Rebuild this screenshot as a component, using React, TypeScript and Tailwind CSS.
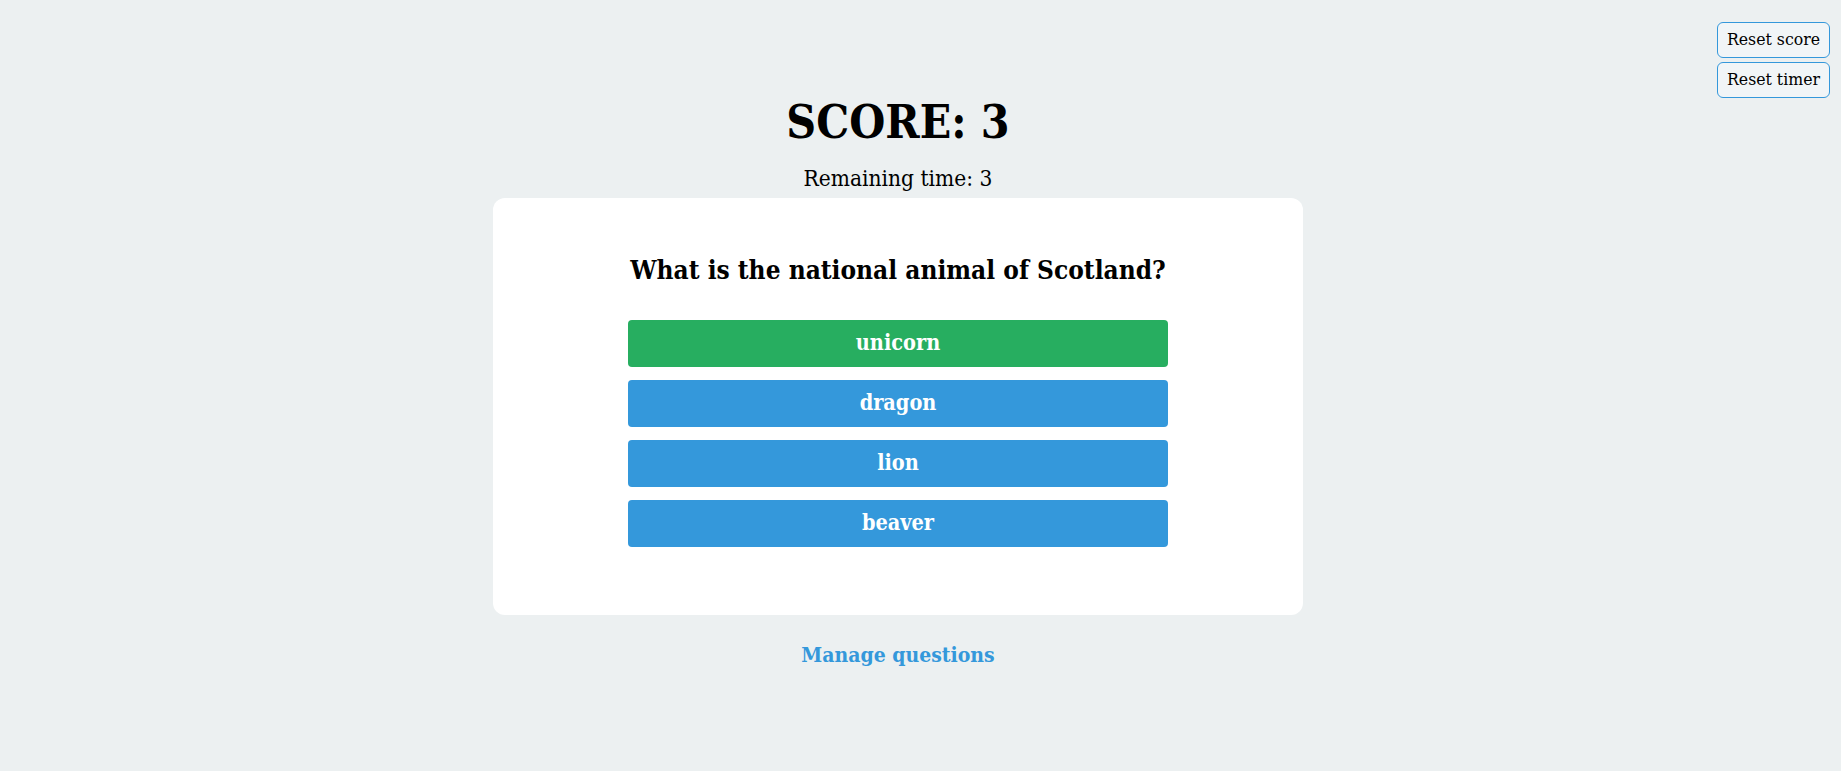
import React from "react";

const serif = { fontFamily: '"DejaVu Serif Condensed", "DejaVu Serif", serif' };

export default function App() {
  const answers = [
    { text: "unicorn", correct: true },
    { text: "dragon", correct: false },
    { text: "lion", correct: false },
    { text: "beaver", correct: false },
  ];
  return (
    <div className="relative min-h-screen w-full bg-[#ecf0f1] text-black" style={serif}>
      <div className="absolute right-[11px] top-[22px] flex flex-col items-stretch gap-[4px]">
        <button className="h-[36px] w-[113px] rounded-[6px] border border-[#3498db] bg-[#f1f5f7] text-[17.5px] leading-none text-black">
          Reset score
        </button>
        <button className="h-[36px] w-[113px] rounded-[6px] border border-[#3498db] bg-[#f1f5f7] text-[17.5px] leading-none text-black">
          Reset timer
        </button>
      </div>
      <div className="flex flex-col items-center pr-[45px] pt-[92px]">
        <h1 className="text-[46px] font-bold leading-[60px]">SCORE: 3</h1>
        <p className="mt-[13px] text-[22.5px] leading-[26px]">Remaining time: 3</p>
        <div className="mt-[7px] flex w-[810px] flex-col items-center rounded-xl bg-white pb-[68px] pt-[55px]">
          <h2 className="text-[26px] font-bold leading-[34px]">What is the national animal of Scotland?</h2>
          <div className="mt-[33px] flex w-[540px] flex-col gap-[13px]">
            {answers.map((a) => (
              <button
                key={a.text}
                className={
                  "h-[47px] w-full rounded-[4px] text-[21.5px] font-bold text-white " +
                  (a.correct ? "bg-[#27ae60]" : "bg-[#3498db]")
                }
              >
                {a.text}
              </button>
            ))}
          </div>
        </div>
        <a href="#" className="mt-[26px] text-[21px] font-bold leading-[28px] text-[#3498db]">
          Manage questions
        </a>
      </div>
    </div>
  );
}
